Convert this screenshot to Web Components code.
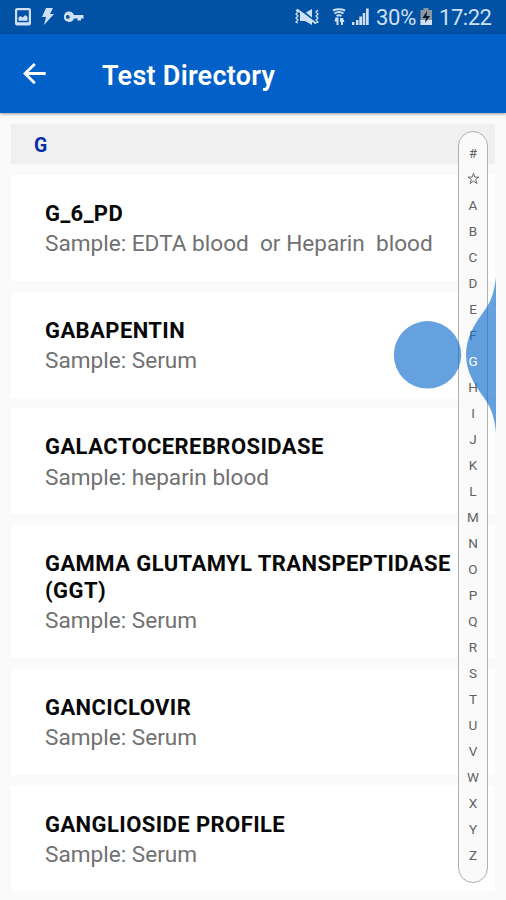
<!DOCTYPE html>
<html lang="en">
<head>
<meta charset="utf-8">
<title>Test Directory</title>
<style>
html,body{margin:0;height:100%;overflow:hidden;background:#fafafa}
body{font-family:Roboto,"Liberation Sans",sans-serif}
</style>
</head>
<body>
<directory-app></directory-app>
<script>
function define(name, html, setup) {
  const t = document.createElement('template');
  t.innerHTML = html;
  customElements.define(name, class extends HTMLElement {
    connectedCallback() {
      if (this.shadowRoot) return;
      this.attachShadow({ mode: 'open' }).append(t.content.cloneNode(true));
      if (setup) setup(this, this.shadowRoot);
    }
  });
}

define('status-bar', `<style>
:host{display:flex;justify-content:space-between;align-items:center;height:34px;box-sizing:border-box;padding:0 14px 0 15px;background:#0151a4;color:#cfe0f5;font-size:22px}
svg{display:block;fill:#cfe0f5}
.l,.r{display:flex;align-items:center}
.r{white-space:nowrap}
</style>
<div class="l">
<svg width="70" height="20" viewBox="0 0 70 20"><path fill-rule="evenodd" d="M2 1h12q2 0 2 2v13.500q0 2-2 2H2q-2 0-2-2V3q0-2 2-2zM2.200 3.200v12h11.600v-12z"/><path d="M3.500 13.800v-3.300l2-1.500 2 1.500 3-2.500 2 2v3.800z"/><path d="M31 1h7l-3 6h4L29 18l2-8h-4z"/><path fill-rule="evenodd" d="M54 4.500a5.200 5.200 0 0 1 5 3.500h9.500v3.500H66v2h-3.500v-2H59a5.200 5.200 0 1 1-5-7zm-1.200 3.500a1.900 1.900 0 1 0 0 3.800 1.900 1.900 0 0 0 0-3.800z"/></svg>
</div>
<div class="r">
<svg width="26" height="20" viewBox="0 0 26 20"><path d="M6 6h5l7-4v16l-7-4H6z"/><path d="M5 1l19 16" stroke="#0151a4" stroke-width="2"/><path d="M3 2.500l19 14" stroke="#cfe0f5" stroke-width="2"/><path d="M2 3l2 2-2 2 2 2-2 2 2 2-2 2 2 1M24 3l-2 2 2 2-2 2 2 2-2 2 2 2-2 1" fill="none" stroke="#cfe0f5" stroke-width="1.300"/></svg>
<svg style="margin-left:11px" width="16" height="20" viewBox="0 0 16 20"><path d="M2 3.500q6-2.500 12 0M3.500 6.500q4.500-3 9 0M5.500 9q2.500-1.500 5 0" fill="none" stroke="#cfe0f5" stroke-width="2"/><path d="M4.500 10.500h3V18H5.500v-3.500H3.500zM9 11h3l1.500 4h-1.500v3h-2v-3H9z"/></svg>
<svg style="margin-left:5px" width="17" height="20" viewBox="0 0 17 20"><path d="M0 15h2.500v3H0zM4 13h2.500v5H4zM7.300 9.500H10V18H7.300zM10.700 6h2.500v12h-2.500zM14 1.500h2.700V18H14z"/></svg>
<span style="margin-left:7px;width:39px;letter-spacing:-.3px">30%</span>
<svg style="margin-left:5px" width="13" height="20" viewBox="0 0 13 20"><path d="M3.500 1h5v2H12v15H.500V3h3z" fill="#8796a0"/><path d="M.500 13H12v5H.500z"/><path d="M7 4l-4.500 7H6l-1 5 5-7H6.500z" fill="#061626"/></svg>
<span style="margin-left:6px;width:53px;letter-spacing:-.45px">17:22</span>
</div>`);

define('app-bar', `<style>
:host{display:flex;align-items:center;height:79px;box-sizing:border-box;padding-left:22px;background:#0161c8;color:#fff;position:relative;box-shadow:0 1px 3px rgba(0,0,0,.4)}
h1{margin:4px 0 0 55px;font-size:27px;font-weight:600;line-height:32px;letter-spacing:.25px}
svg{display:block}
</style>
<svg width="25" height="26" viewBox="0 0 25 26"><path d="M23.700 12.500H3M12.800 3L3 12.500l9.800 9.800" fill="none" stroke="#fff" stroke-width="2.800"/></svg>
<h1><slot></slot></h1>`);

define('section-header', `<style>
:host{display:flex;align-items:center;box-sizing:border-box;height:40px;padding:2px 0 0 23px;background:#f0f0f0;color:#0a2fa0;font-size:19.500px;font-weight:700}
</style><slot></slot>`);

define('test-card', `<style>
:host{display:block;box-sizing:border-box;padding:26px 0 23.400px 34px;background:#fff}
.t{font-size:22px;line-height:26.800px;font-weight:700;letter-spacing:.42px;color:#080808;white-space:pre-line}
.s{margin-top:2.500px;font-size:22.600px;line-height:27.300px;color:#717171;white-space:pre}
</style><div class="t"><slot></slot></div><div class="s"></div>`, (el, root) => {
  root.querySelector('.s').textContent = 'Sample: ' + el.getAttribute('sample');
});

define('alpha-index', `<style>
:host{display:flex;flex-direction:column;align-items:center;width:30px;height:752px;box-sizing:border-box;padding-top:8px;border:1px solid #b0b0b0;border-radius:15px;background:#fafafa;color:#626262;font-size:13.500px}
span{height:26px;line-height:26px;flex:none}
.on{color:#fff;position:relative;z-index:3}
svg{display:block;margin:6.500px 0}
</style>`, (el, root) => {
  for (const c of '#*ABCDEFGHIJKLMNOPQRSTUVWXYZ') {
    if (c === '*') {
      root.append(document.createRange().createContextualFragment('<svg width="13" height="13" viewBox="0 0 13 13"><path d="M6.500 1.200l1.300 3.900h4.200L8.600 7.500l1.300 4-3.400-2.400-3.400 2.400 1.300-4L1 5.100h4.200z" fill="none" stroke="#6b6b6b"/></svg>'));
      continue;
    }
    const s = document.createElement('span');
    s.textContent = c;
    if (c === 'G') s.className = 'on';
    root.append(s);
  }
});

define('touch-wave', `<style>
:host{display:block;width:103px;height:160px;pointer-events:none}svg{display:block}
</style><svg width="103" height="160" viewBox="393 275 103 160" fill="#1570cd" fill-opacity=".66"><circle cx="427.500" cy="354.800" r="33.700"/><path d="M496 277C494 296 489 305 482 314C474 325 466 338 466 354.500C466 371 474 384 482 395C489 404 494 413 496 432Z"/></svg>`);

define('directory-app', `<style>
:host{display:block;position:relative;height:900px;overflow:hidden;background:#fafafa}
main{display:flex;flex-direction:column;gap:10.800px;padding:11px 11px 0 11px}
.i{position:absolute;left:458px;top:130.500px}
.w{position:absolute;left:393px;top:275px;z-index:2}
</style>
<status-bar></status-bar><app-bar>Test Directory</app-bar>
<main>
<section-header>G</section-header>
<test-card sample="EDTA blood  or Heparin  blood">G_6_PD</test-card>
<test-card sample="Serum">GABAPENTIN</test-card>
<test-card sample="heparin blood">GALACTOCEREBROSIDASE</test-card>
<test-card sample="Serum">GAMMA GLUTAMYL TRANSPEPTIDASE
(GGT)</test-card>
<test-card sample="Serum">GANCICLOVIR</test-card>
<test-card sample="Serum">GANGLIOSIDE PROFILE</test-card>
</main>
<alpha-index class="i"></alpha-index>
<touch-wave class="w"></touch-wave>`);
</script>
</body>
</html>
